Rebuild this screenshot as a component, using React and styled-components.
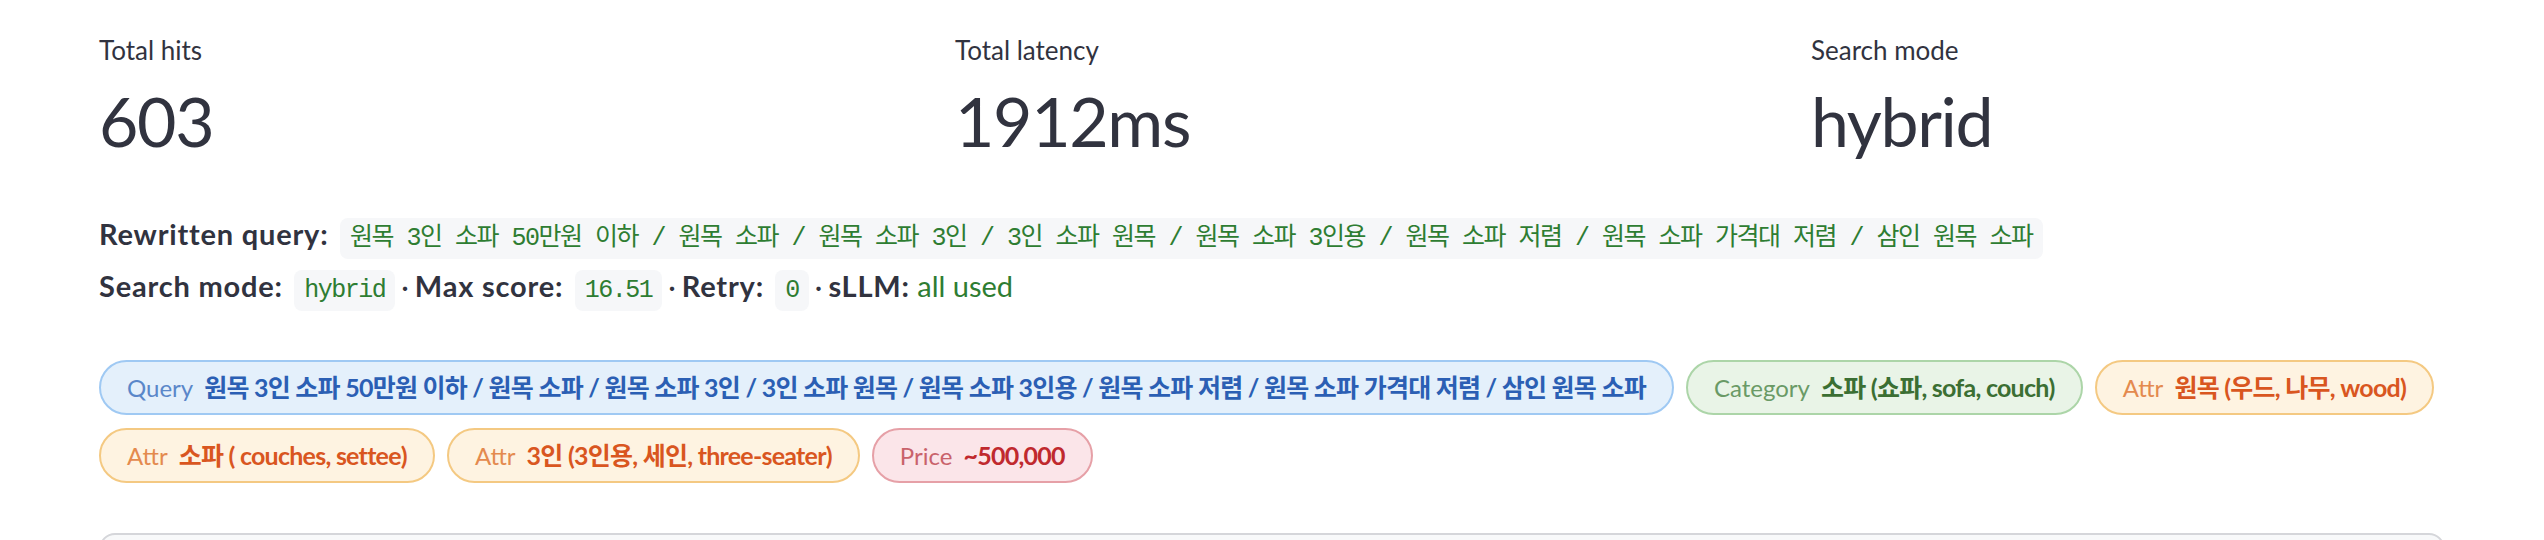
import React from "react";
import styled, { createGlobalStyle } from "styled-components";

const GlobalStyle = createGlobalStyle`
  html, body {
    margin: 0;
    padding: 0;
    background: #ffffff;
  }
  body {
    font-family: Lato, "Noto Sans CJK KR", sans-serif;
    color: #31333f;
    overflow: hidden;
  }
`;

const Main = styled.main`
  padding: 32px 24px 0 99px;
  box-sizing: border-box;
  width: 100%;
`;

const MetricsRow = styled.div`
  display: grid;
  grid-template-columns: repeat(3, 824px);
  column-gap: 32px;
`;

const Metric = styled.div`
  display: flex;
  flex-direction: column;
`;

const MetricLabel = styled.div`
  font-size: 26px;
  line-height: 36px;
  color: #31333f;
`;

const MetricValue = styled.div`
  margin-top: 13px;
  font-size: 68px;
  line-height: 80px;
  letter-spacing: -0.02em;
  color: #31333f;
`;

const Summary = styled.div`
  margin-top: 47px;
  font-size: 29px;
  line-height: 52px;
`;

const Line = styled.div`
  white-space: nowrap;
`;

const Key = styled.strong`
  font-weight: 700;
  letter-spacing: 0.8px;
`;

const Code = styled.code`
  font-family: "Liberation Mono", "Noto Sans CJK KR", monospace;
  font-size: 25px;
  line-height: 1;
  letter-spacing: -1.5px;
  color: #2e7d32;
  background: #f6f7f9;
  border-radius: 8px;
  padding: 6px 10px;
  margin-left: 4px;
  margin-right: 4px;
`;

const Dot = styled.span`
  margin: 0 6px 0 2px;
`;

const Good = styled.span`
  color: #2e7d32;
`;

const Pills = styled.div`
  margin-top: 48px;
  display: flex;
  flex-wrap: wrap;
  column-gap: 12px;
  row-gap: 13px;
`;

const tones = {
  query: { bg: "#e4f0fb", border: "#9fc9f3", label: "#5a87c9", value: "#2b5fb4" },
  category: { bg: "#e9f4e7", border: "#acd5a8", label: "#6a9a66", value: "#3b6f33" },
  attr: { bg: "#fef3e1", border: "#f4c982", label: "#e48a4e", value: "#d9561f" },
  price: { bg: "#fbe5e9", border: "#e6a0a7", label: "#c9626b", value: "#c0292e" },
};

const Pill = styled.span`
  display: inline-block;
  box-sizing: border-box;
  height: 55px;
  line-height: 51px;
  padding: 0 26px;
  border-radius: 999px;
  border: 2px solid ${(p) => tones[p.$tone].border};
  background: ${(p) => tones[p.$tone].bg};
  font-size: 25px;
  white-space: nowrap;
`;

const PillLabel = styled.span`
  font-size: 24px;
  color: ${(p) => tones[p.$tone].label};
  margin-right: 11px;
`;

const PillValue = styled.span`
  font-size: 25px;
  font-weight: 700;
  letter-spacing: -0.75px;
  color: ${(p) => tones[p.$tone].value};
`;

const ResultsBox = styled.div`
  margin-top: 50px;
  margin-right: 75px;
  height: 200px;
  border: 2px solid #d5d6da;
  border-radius: 16px;
  background: #f8f9fa;
`;

const rewritten =
  "원목 3인 소파 50만원 이하 / 원목 소파 / 원목 소파 3인 / 3인 소파 원목 / 원목 소파 3인용 / 원목 소파 저렴 / 원목 소파 가격대 저렴 / 삼인 원목 소파";

const metrics = [
  { label: "Total hits", value: "603" },
  { label: "Total latency", value: "1912ms" },
  { label: "Search mode", value: "hybrid" },
];

const pills = [
  { tone: "query", label: "Query", value: rewritten },
  { tone: "category", label: "Category", value: "소파 (쇼파, sofa, couch)" },
  { tone: "attr", label: "Attr", value: "원목 (우드, 나무, wood)" },
  { tone: "attr", label: "Attr", value: "소파 ( couches, settee)" },
  { tone: "attr", label: "Attr", value: "3인 (3인용, 세인, three-seater)" },
  { tone: "price", label: "Price", value: "~500,000" },
];

export default function App() {
  return (
    <>
      <GlobalStyle />
      <Main>
        <MetricsRow>
          {metrics.map((m) => (
            <Metric key={m.label}>
              <MetricLabel>{m.label}</MetricLabel>
              <MetricValue>{m.value}</MetricValue>
            </Metric>
          ))}
        </MetricsRow>

        <Summary>
          <Line>
            <Key>Rewritten query:</Key> <Code>{rewritten}</Code>
          </Line>
          <Line>
            <Key>Search mode:</Key> <Code>hybrid</Code>
            <Dot>·</Dot>
            <Key>Max score:</Key> <Code>16.51</Code>
            <Dot>·</Dot>
            <Key>Retry:</Key> <Code>0</Code>
            <Dot>·</Dot>
            <Key>sLLM:</Key> <Good>all used</Good>
          </Line>
        </Summary>

        <Pills>
          {pills.map((p, i) => (
            <Pill key={i} $tone={p.tone}>
              <PillLabel $tone={p.tone}>{p.label}</PillLabel>
              <PillValue $tone={p.tone}>{p.value}</PillValue>
            </Pill>
          ))}
        </Pills>

        <ResultsBox />
      </Main>
    </>
  );
}
